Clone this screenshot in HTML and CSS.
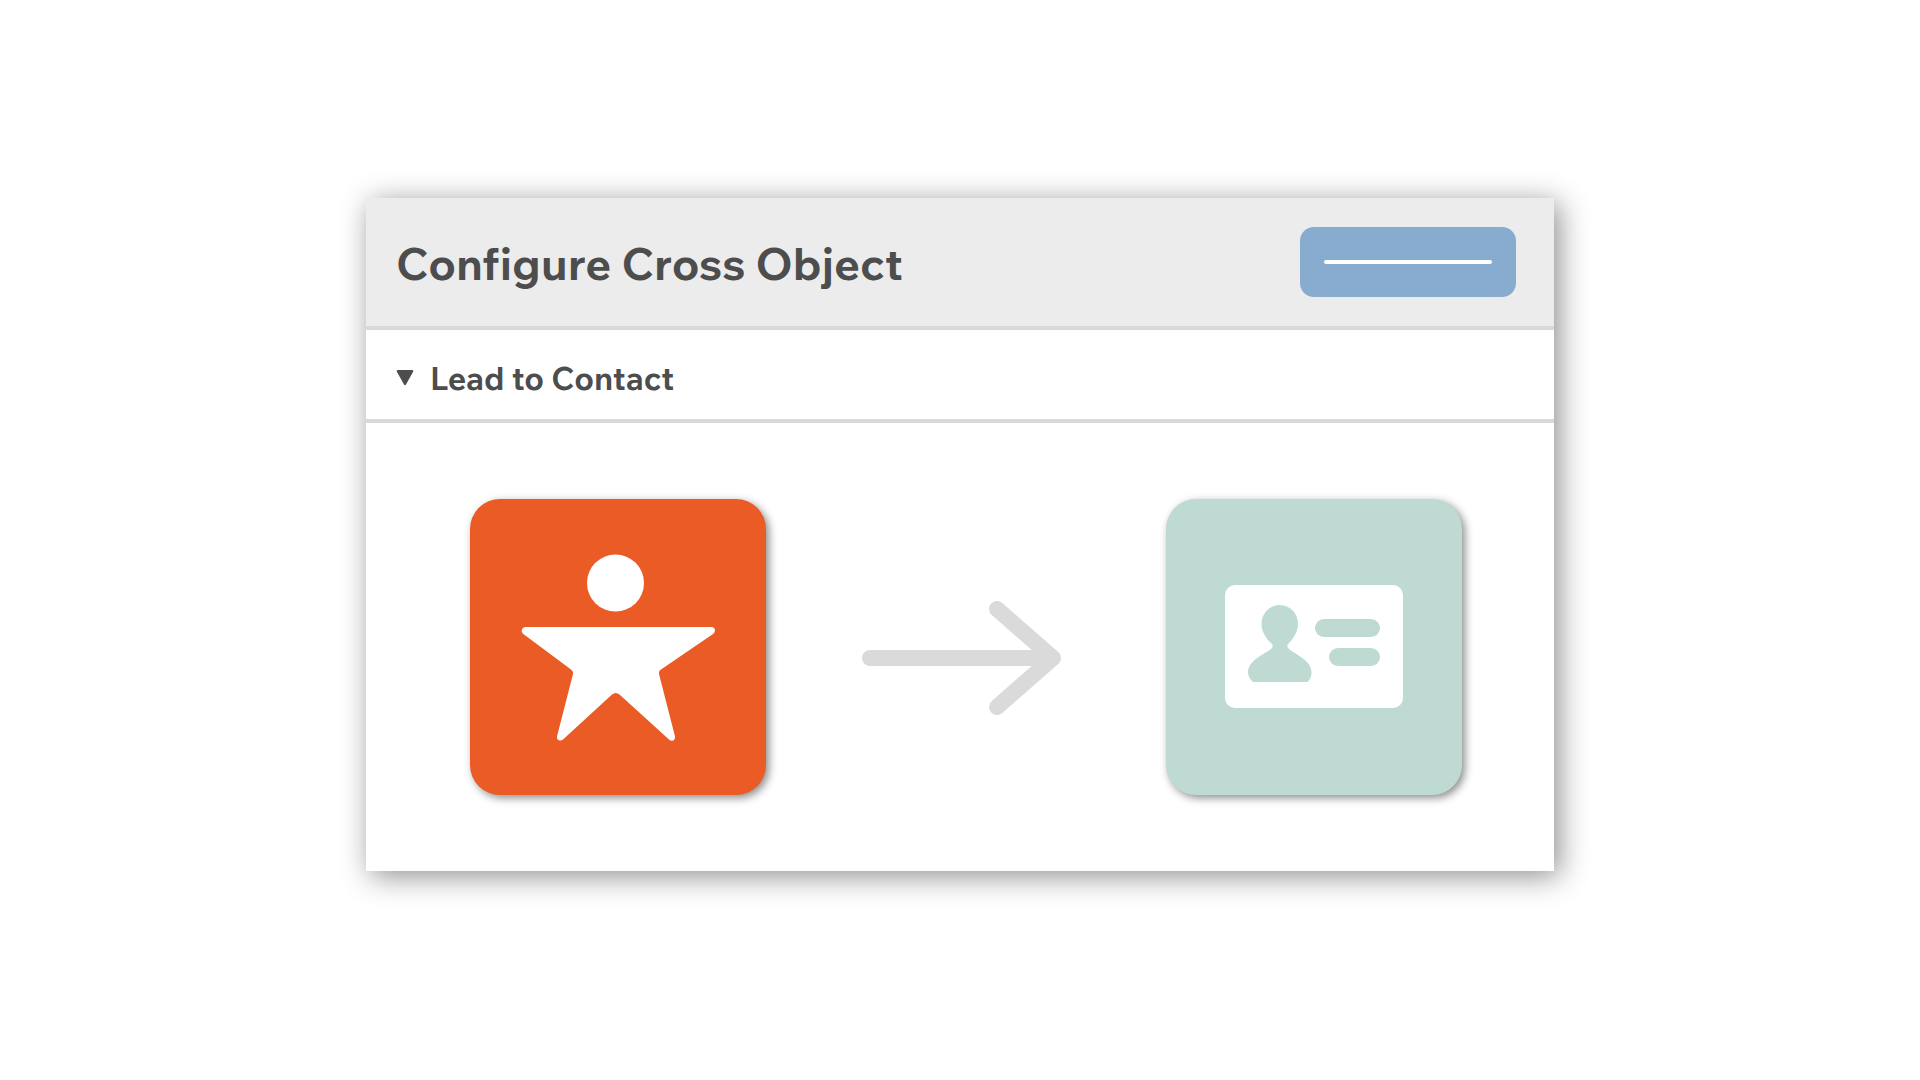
FILE: index.html
```html
<!DOCTYPE html>
<html lang="en">
<head>
  <meta charset="UTF-8">
  <meta name="viewport" content="width=device-width, initial-scale=1.0">
  <title>Configure Cross Object</title>
  <link rel="stylesheet" href="styles.css">
</head>
<body>
  <main class="panel">
    <header class="panel-header">
      <h1>Configure Cross Object</h1>
      <button type="button" class="action" aria-label="Save"><span class="action-line"></span></button>
    </header>

    <details class="mapping" open>
      <summary>
        <svg class="caret" viewBox="0 0 18 16" aria-hidden="true">
          <path d="M2 0H16Q18 0 17 2L10 14.500Q9 16 8 14.500L1 2Q0 0 2 0Z"/>
        </svg>
        <h2>Lead to Contact</h2>
      </summary>

      <div class="flow">
        <!-- lead -->
        <svg class="tile tile-lead" viewBox="0 0 296 296" role="img" aria-label="Lead">
          <circle cx="145.500" cy="84" r="28.500"/>
          <path d="M55.500 128H241.500C245 128 246.500 132.500 243 135L191 170.500Q188.500 172 189 175L205 237.500C205.500 241.500 202 243 199 240.500L149.500 195.500Q145.700 192.500 142 195.500L93 240.500C90 243 86.500 241 87 237.500L103 175Q103.500 172.500 101 170.500L53 134.800C50.500 132.500 52 128 55.500 128Z"/>
        </svg>

        <svg class="arrow" viewBox="0 0 208 136" aria-hidden="true">
          <path d="M8 79H191M135 30L191 79L135 128"/>
        </svg>

        <!-- contact -->
        <svg class="tile tile-contact" viewBox="0 0 296 296" role="img" aria-label="Contact">
          <rect x="59" y="86" width="178" height="123" rx="10"/>
          <g class="card-detail">
            <path d="M113.700 106C103.500 106 95.500 114.500 95.500 125C95.500 133 100.500 140 105.500 144.500C107 146 107 148 105.500 149.500C100 154.500 82 161 82 173C82 177 84 180.500 87 183H141.500C144.500 180.500 145.500 177 145.500 173C145.500 161 127.500 154.500 122.500 149.500C121 148 121 146 122.500 144.500C127 140 132 133 132 125C132 114.500 124 106 113.700 106Z"/>
            <rect x="149" y="120" width="65" height="18" rx="9"/>
            <rect x="163" y="149" width="51" height="18" rx="9"/>
          </g>
        </svg>
      </div>
    </details>
  </main>
</body>
</html>
```

FILE: styles.css
```css
* {
  box-sizing: border-box;
}
body {
  font-family: 'Wix Madefor Text', 'Wix Madefor Display', 'Lato', sans-serif;
  display: flex;
  justify-content: center;
  align-items: center;
  min-height: 100vh;
  margin: 0;
  padding: 0 24px 12px;
  background-color: #fff;
  color: #4d4d4d;
}
h1,
h2 {
  margin: 0;
  font-weight: bold;
}
h1 {
  padding-top: 2px;
  font-size: 45px;
  line-height: 56px;
}
h2 {
  font-size: 32px;
  line-height: 40px;
}
.panel {
  width: 100%;
  max-width: 1188px;
  background-color: #fff;
  box-shadow: 5px 5px 28px rgba(0, 0, 0, 0.45);
}
.panel-header {
  display: flex;
  justify-content: space-between;
  align-items: center;
  padding: 29px 38px 29px 30px;
  background-color: #ececec;
  border-bottom: 4px solid #d9d9d9;
}
.action {
  display: flex;
  align-items: center;
  width: 216px;
  height: 70px;
  padding: 0 24px;
  border: none;
  border-radius: 14px;
  background-color: #88abd0;
  cursor: pointer;
}
.action-line {
  flex: 1;
  height: 4px;
  border-radius: 2px;
  background-color: #fff;
}
.mapping summary {
  display: flex;
  align-items: center;
  gap: 16px;
  padding: 28px 30px 21px;
  border-bottom: 4px solid #d9d9d9;
  list-style: none;
  cursor: pointer;
}
.caret {
  width: 18px;
  height: 16px;
  fill: #4d4d4d;
}
.flow {
  display: flex;
  justify-content: space-between;
  align-items: center;
  padding: 76px 92px 76px 104px;
}
.tile {
  width: 296px;
  height: 296px;
  border-radius: 30px;
  box-shadow: 3px 3px 8px rgba(0, 0, 0, 0.45);
  fill: #fff;
}
.tile-lead {
  background-color: #eb5b26;
}
.tile-contact {
  background-color: #bfdad2;
}
.card-detail {
  fill: #bfdad2;
}
.arrow {
  width: 208px;
  height: 136px;
  fill: none;
  stroke: #dadada;
  stroke-width: 16px;
  stroke-linecap: round;
  stroke-linejoin: round;
}
```
